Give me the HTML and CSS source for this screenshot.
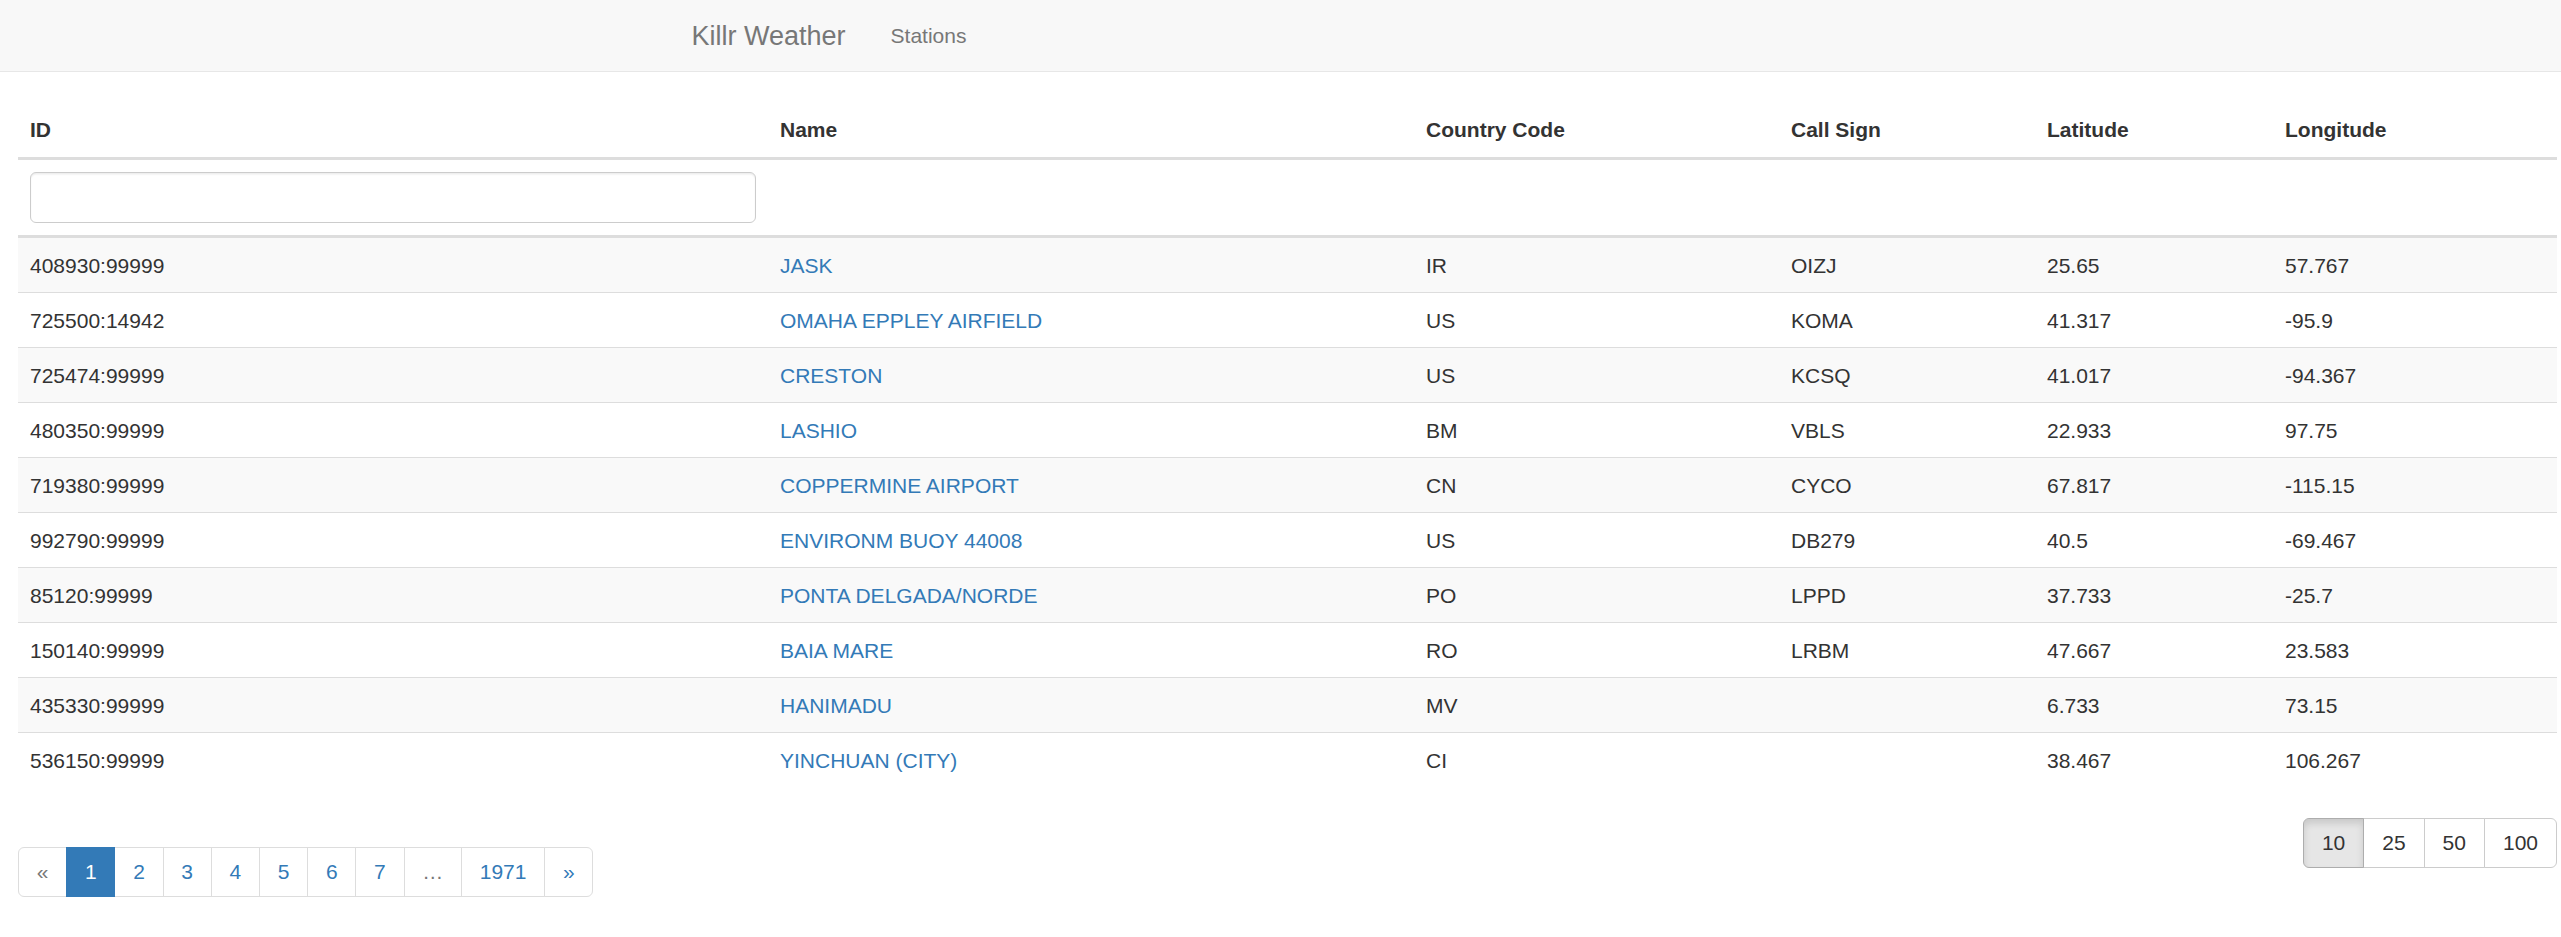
FILE: index.html
```html
<!DOCTYPE html>
<html>
<head>
<meta charset="utf-8">
<title>Killr Weather</title>
<link rel="stylesheet" href="styles.css">
</head>
<body>
<nav class="navbar">
  <a class="brand" href="#">Killr Weather</a>
  <a class="nav-link" href="#">Stations</a>
</nav>
<main class="main">
  <table class="table">
    <colgroup>
      <col class="c-id"><col class="c-name"><col class="c-cc"><col class="c-cs"><col class="c-lat"><col class="c-lon">
    </colgroup>
    <thead>
      <tr>
        <th>ID</th><th>Name</th><th>Country Code</th><th>Call Sign</th><th>Latitude</th><th>Longitude</th>
      </tr>
      <tr class="filter-row">
        <td><input class="form-control" type="text"></td><td></td><td></td><td></td><td></td><td></td>
      </tr>
    </thead>
    <tbody>
      <tr><td>408930:99999</td><td><a href="#">JASK</a></td><td>IR</td><td>OIZJ</td><td>25.65</td><td>57.767</td></tr>
      <tr><td>725500:14942</td><td><a href="#">OMAHA EPPLEY AIRFIELD</a></td><td>US</td><td>KOMA</td><td>41.317</td><td>-95.9</td></tr>
      <tr><td>725474:99999</td><td><a href="#">CRESTON</a></td><td>US</td><td>KCSQ</td><td>41.017</td><td>-94.367</td></tr>
      <tr><td>480350:99999</td><td><a href="#">LASHIO</a></td><td>BM</td><td>VBLS</td><td>22.933</td><td>97.75</td></tr>
      <tr><td>719380:99999</td><td><a href="#">COPPERMINE AIRPORT</a></td><td>CN</td><td>CYCO</td><td>67.817</td><td>-115.15</td></tr>
      <tr><td>992790:99999</td><td><a href="#">ENVIRONM BUOY 44008</a></td><td>US</td><td>DB279</td><td>40.5</td><td>-69.467</td></tr>
      <tr><td>85120:99999</td><td><a href="#">PONTA DELGADA/NORDE</a></td><td>PO</td><td>LPPD</td><td>37.733</td><td>-25.7</td></tr>
      <tr><td>150140:99999</td><td><a href="#">BAIA MARE</a></td><td>RO</td><td>LRBM</td><td>47.667</td><td>23.583</td></tr>
      <tr><td>435330:99999</td><td><a href="#">HANIMADU</a></td><td>MV</td><td></td><td>6.733</td><td>73.15</td></tr>
      <tr><td>536150:99999</td><td><a href="#">YINCHUAN (CITY)</a></td><td>CI</td><td></td><td>38.467</td><td>106.267</td></tr>
    </tbody>
  </table>
  <div class="pager">
    <ul class="pagination">
      <li class="disabled"><a href="#">«</a></li>
      <li class="active"><a href="#">1</a></li>
      <li><a href="#">2</a></li>
      <li><a href="#">3</a></li>
      <li><a href="#">4</a></li>
      <li><a href="#">5</a></li>
      <li><a href="#">6</a></li>
      <li><a href="#">7</a></li>
      <li class="disabled"><a href="#">…</a></li>
      <li><a href="#">1971</a></li>
      <li><a href="#">»</a></li>
    </ul>
    <div class="btn-group">
      <button class="btn active">10</button>
      <button class="btn">25</button>
      <button class="btn">50</button>
      <button class="btn">100</button>
    </div>
  </div>
</main>
</body>
</html>
```
FILE: styles.css
```css
* { box-sizing: border-box; }
html, body { margin: 0; padding: 0; }
body {
  font-family: "Liberation Sans", Arial, Helvetica, sans-serif;
  font-size: 21px;
  line-height: 30px;
  color: #333;
  background: #fff;
}
a { text-decoration: none; color: #337ab7; }

.navbar {
  display: flex;
  align-items: center;
  height: 72px;
  background: #f8f8f8;
  border-bottom: 1px solid #e7e7e7;
  padding-left: 669px;
}
.brand {
  font-size: 27px;
  line-height: 30px;
  padding: 0 22.5px;
  color: #777;
}
.nav-link {
  font-size: 21px;
  line-height: 30px;
  padding: 0 22.5px;
  color: #777;
}

.main {
  padding: 31px 4px 40px 18px;
}

.table {
  width: 100%;
  border-collapse: collapse;
  table-layout: fixed;
}
.c-id { width: 750px; }
.c-name { width: 646px; }
.c-cc { width: 365px; }
.c-cs { width: 256px; }
.c-lat { width: 238px; }

.table th {
  text-align: left;
  font-weight: bold;
  padding: 12px;
  line-height: 30px;
  vertical-align: bottom;
  border-bottom: 3px solid #ddd;
}
.filter-row td {
  padding: 12px;
  border-bottom: 3px solid #ddd;
}
.table tbody td {
  padding: 13px 12px 11px;
  line-height: 30px;
  border-top: 1px solid #ddd;
  white-space: nowrap;
}
.table tbody tr:first-child td { border-top: 0; }
.table tbody tr:nth-child(odd) td { background: #f9f9f9; }

.form-control {
  display: block;
  width: 100%;
  height: 51px;
  padding: 9px 18px;
  font: inherit;
  color: #555;
  background: #fff;
  border: 1px solid #ccc;
  border-radius: 6px;
  box-shadow: inset 0 1.5px 1.5px rgba(0,0,0,.075);
}

.pager {
  display: flex;
  justify-content: space-between;
  align-items: flex-start;
  padding-top: 31px;
}
.pagination {
  display: flex;
  list-style: none;
  margin: 29px 0 0 0;
  padding: 0;
}
.pagination li a {
  display: block;
  padding: 9px 17.75px;
  line-height: 30px;
  border: 1px solid #ddd;
  margin-left: -1px;
  background: #fff;
  color: #337ab7;
}
.pagination li:first-child a {
  margin-left: 0;
  border-radius: 6px 0 0 6px;
}
.pagination li:last-child a {
  border-radius: 0 6px 6px 0;
}
.pagination li.active a {
  background: #337ab7;
  border-color: #337ab7;
  color: #fff;
  position: relative;
}
.pagination li.disabled a { color: #777; }

.btn-group { display: flex; }
.btn {
  font: inherit;
  font-size: 21px;
  line-height: 30px;
  padding: 9px 18px;
  color: #333;
  background: #fff;
  border: 1px solid #ccc;
  margin-left: -1px;
  cursor: pointer;
}
.btn:first-child { margin-left: 0; border-radius: 6px 0 0 6px; }
.btn:last-child { border-radius: 0 6px 6px 0; }
.btn.active {
  background: #e6e6e6;
  border-color: #adadad;
  box-shadow: inset 0 4.5px 7.5px rgba(0,0,0,.125);
  position: relative;
}
```
